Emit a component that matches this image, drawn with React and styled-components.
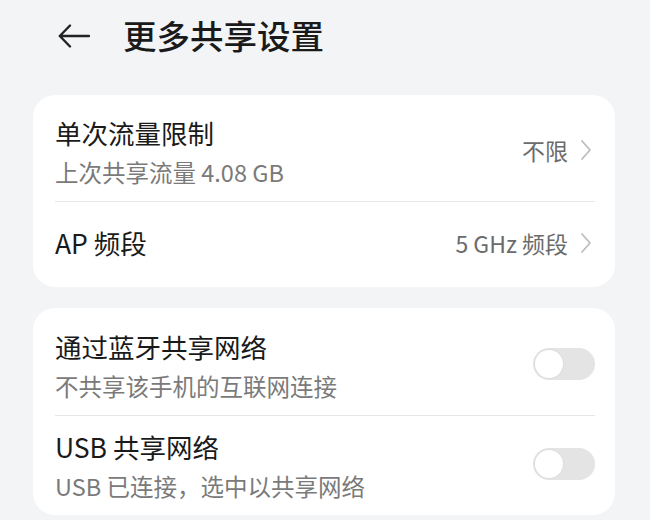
import React from 'react';
import styled, { createGlobalStyle } from 'styled-components';

const GlobalStyle = createGlobalStyle`
  html, body {
    margin: 0;
    padding: 0;
    background: #f3f4f6;
  }
  body {
    font-family: "Noto Sans CJK SC", "Noto Sans", sans-serif;
    color: #1b1b1b;
  }
`;

const Page = styled.div`
  width: 650px;
  height: 520px;
  overflow: hidden;
  box-sizing: border-box;
  padding: 0 35px 0 33px;
  background: #f3f4f6;
`;

const Header = styled.div`
  height: 72px;
  display: flex;
  align-items: center;
  gap: 33px;
  padding-left: 25px;
`;

const BackButton = styled.button`
  border: none;
  background: none;
  padding: 0;
  width: 32px;
  height: 24px;
  display: flex;
  cursor: pointer;
`;

const Title = styled.h1`
  margin: 0 0 2px;
  font-size: 33.5px;
  font-weight: 500;
  line-height: 40px;
  color: #1a1a1a;
`;

const Card = styled.div`
  background: #ffffff;
  border-radius: 22px;
  padding: 0 20px 0 22px;
  margin-top: ${(p) => p.$gap}px;
`;

const Row = styled.div`
  display: flex;
  align-items: center;
  justify-content: space-between;
  min-height: ${(p) => p.$height}px;
  box-sizing: border-box;
  padding: ${(p) => (p.$top != null ? `${p.$top}px 0 12px` : '0 0 4px')};
  & + & {
    border-top: 1px solid #e6e6e6;
  }
`;

const Texts = styled.div`
  display: flex;
  flex-direction: column;
`;

const RowTitle = styled.div`
  font-size: 26.5px;
  line-height: 44px;
  color: #1a1a1a;
`;

const RowSub = styled.div`
  font-size: 23.5px;
  line-height: 34px;
  color: #7a7a7a;
`;

const Value = styled.div`
  display: flex;
  align-items: center;
  gap: 12px;
  font-size: 23px;
  color: #6b6b6b;
  padding-right: 3px;
`;

const Switch = styled.div`
  width: 62px;
  height: 32px;
  border-radius: 16px;
  background: #e4e4e4;
  position: relative;
  flex-shrink: 0;
  &::after {
    content: '';
    position: absolute;
    left: 2px;
    top: 2px;
    width: 28px;
    height: 28px;
    border-radius: 50%;
    background: #ffffff;
    box-shadow: 0 0 0 1px #dcdcdc;
  }
`;

const BackArrow = () => (
  <svg width="32" height="24" viewBox="0 0 32 24" fill="none">
    <path
      d="M12 1.5 L1.8 12 L12 22.5 M1.8 12 H31"
      stroke="#222"
      strokeWidth="2.4"
      strokeLinecap="round"
      strokeLinejoin="round"
    />
  </svg>
);

const Chevron = () => (
  <svg width="12" height="22" viewBox="0 0 12 22" fill="none">
    <polyline
      points="2,2 10,11 2,20"
      stroke="#bdbdbd"
      strokeWidth="1.8"
      strokeLinecap="round"
      strokeLinejoin="round"
    />
  </svg>
);

export default function App() {
  return (
    <>
      <GlobalStyle />
      <Page>
        <Header>
          <BackButton aria-label="back">
            <BackArrow />
          </BackButton>
          <Title>更多共享设置</Title>
        </Header>

        <Card $gap={23}>
          <Row $top={16} $height={106}>
            <Texts>
              <RowTitle>单次流量限制</RowTitle>
              <RowSub>上次共享流量 4.08 GB</RowSub>
            </Texts>
            <Value>
              不限
              <Chevron />
            </Value>
          </Row>
          <Row $height={86}>
            <RowTitle>AP 频段</RowTitle>
            <Value>
              5 GHz 频段
              <Chevron />
            </Value>
          </Row>
        </Card>

        <Card $gap={21}>
          <Row $top={17} $height={105}>
            <Texts>
              <RowTitle>通过蓝牙共享网络</RowTitle>
              <RowSub>不共享该手机的互联网连接</RowSub>
            </Texts>
            <Switch />
          </Row>
          <Row $top={9} $height={100}>
            <Texts>
              <RowTitle>USB 共享网络</RowTitle>
              <RowSub>USB 已连接，选中以共享网络</RowSub>
            </Texts>
            <Switch />
          </Row>
        </Card>
      </Page>
    </>
  );
}
